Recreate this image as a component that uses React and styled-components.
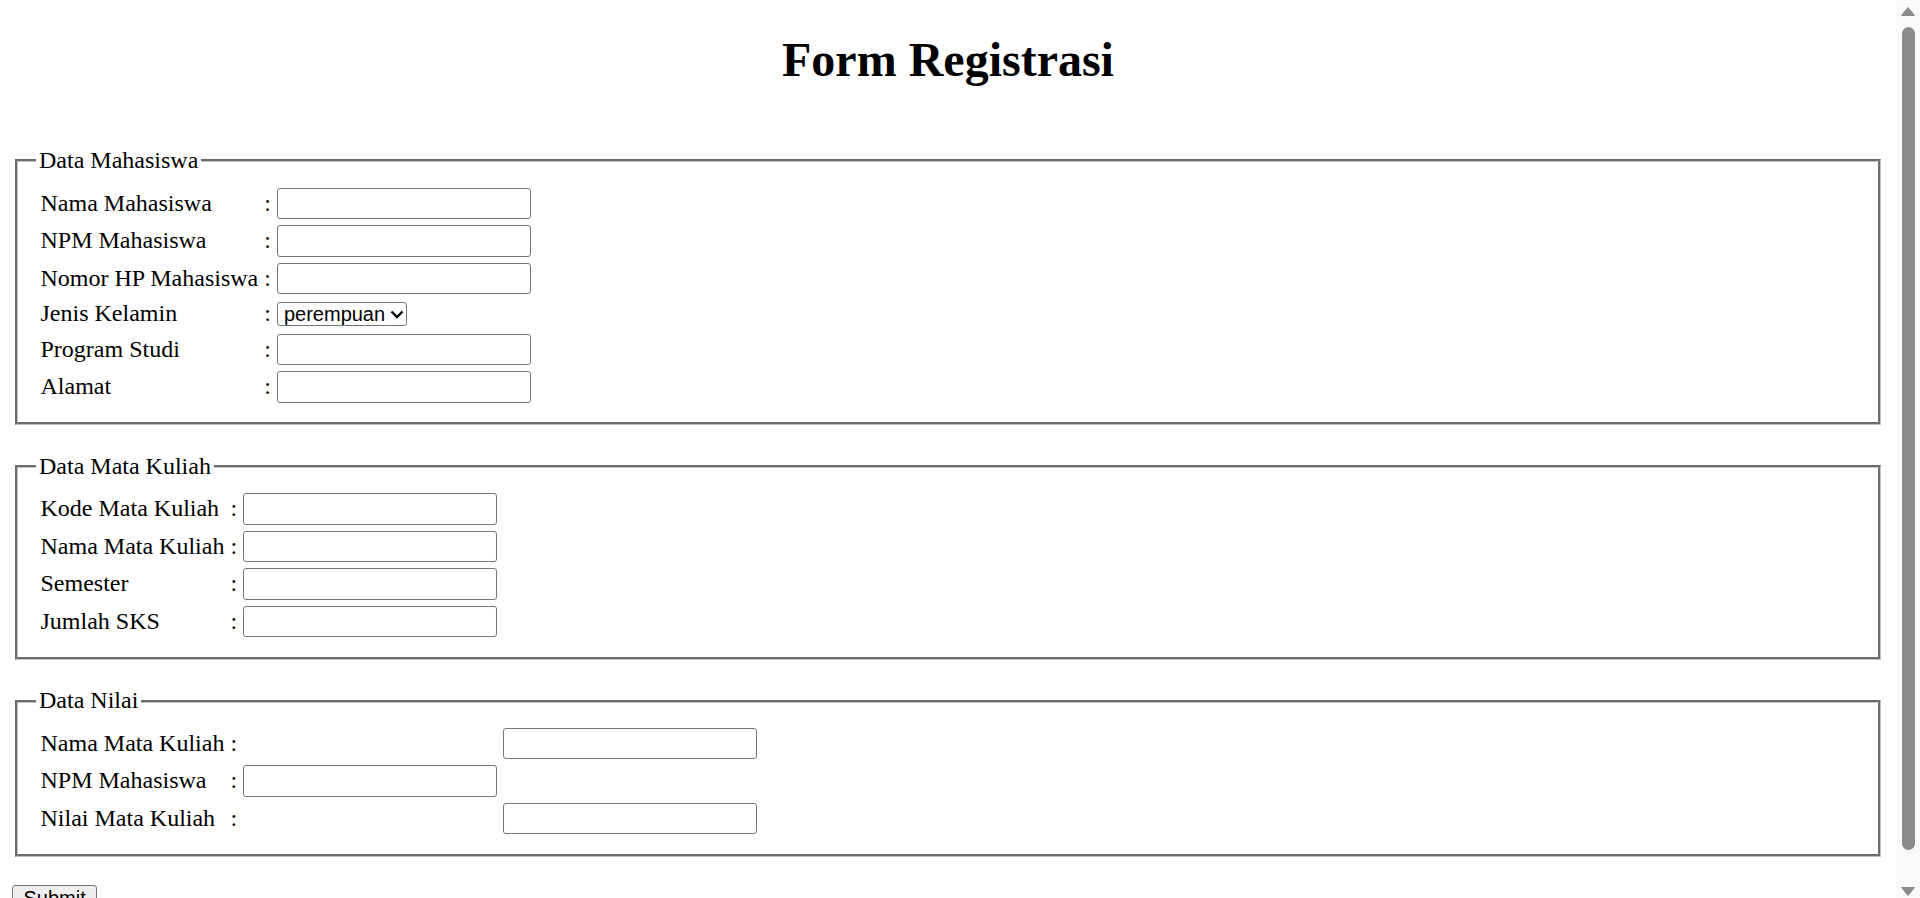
import styled, { createGlobalStyle } from "styled-components"

const GlobalStyle = createGlobalStyle`
html, body {
  margin: 0;
  background: #fff;
}
body {
  font-family: "Liberation Serif", "Times New Roman", serif;
  font-size: 24px;
  line-height: 27.6px;
  color: #000;
}
`

// window frame: page on the left, a classic scrollbar on the right
const Shell = styled.div`
display: flex;
height: 100vh;
overflow: hidden;
`

const Page = styled.div`
flex: 1;
min-width: 0;
padding: 0 12px 12px;
`

const ScrollBar = styled.div`
width: 24px;
flex: none;
display: flex;
flex-direction: column;
background: #fafafa;
`

const ArrowButton = styled.div`
height: 26px;
flex: none;
display: flex;
justify-content: center;
align-items: ${p => (p.down ? "flex-end" : "flex-start")};
padding: ${p => (p.down ? "0 0 2px" : "7px 0 0")};
box-sizing: border-box;
`

const Track = styled.div`
flex: 1;
padding: 1px 5px 0 6px;
`

const Thumb = styled.div`
height: 823px;
border-radius: 7px;
background: #8b8b8b;
`

const Title = styled.h1`
text-align: center;
font-size: 48px;
line-height: 55.2px;
font-weight: bold;
margin: 32.16px 0;
`

const Fieldset = styled.fieldset`
margin: 0 3px;
padding: 8.4px 18px 15px;
border: 3px groove rgb(192, 192, 192);
min-inline-size: min-content;
`

const Legend = styled.legend`
padding: 0 3px;
font-size: 24px;
line-height: 27.6px;
`

const Table = styled.table`
border-collapse: separate;
border-spacing: 3px;
`

const Cell = styled.td`
padding: 1.5px;
vertical-align: middle;
white-space: nowrap;
`

const Input = styled.input`
display: block;
box-sizing: border-box;
width: 254px;
height: 31.5px;
margin: 0;
padding: 1.5px 3px;
border: 1px solid #767676;
border-radius: 3px;
background: #fff;
font-family: "Liberation Sans", Arial, sans-serif;
font-size: 20px;
`

const SelectBox = styled.div`
position: relative;
width: 130px;
`

const Select = styled.select`
display: block;
box-sizing: border-box;
width: 130px;
height: 24px;
margin: 0;
padding: 0 0 0 6px;
border: 1px solid #767676;
border-radius: 3px;
background: #fff;
color: #000;
appearance: none;
font-family: "Liberation Sans", Arial, sans-serif;
font-size: 20px;
line-height: 22px;
`

const Chevron = styled.svg`
position: absolute;
right: 3px;
top: 8px;
pointer-events: none;
`

const Button = styled.button`
margin: 0;
padding: 1.5px 10.5px;
border: 1px solid #767676;
border-radius: 3px;
background: #efefef;
color: #000;
font-family: "Liberation Sans", Arial, sans-serif;
font-size: 20px;
line-height: 23px;
`

const Row = ({ label, children, skip }) => (
    <tr>
        <Cell>{label}</Cell>
        <Cell>:</Cell>
        {skip && <Cell></Cell>}
        <Cell>{children}</Cell>
    </tr>
)

const App = () => {
    return (
        <Shell>
            <GlobalStyle />
            <Page>
                <Title>Form Registrasi</Title>
                <form onSubmit={e => e.preventDefault()}>
                    <br />
                    <Fieldset>
                        <Legend>Data Mahasiswa</Legend>
                        <Table>
                            <tbody>
                                <Row label="Nama Mahasiswa"><Input type="text" /></Row>
                                <Row label="NPM Mahasiswa"><Input type="text" /></Row>
                                <Row label="Nomor HP Mahasiswa"><Input type="text" /></Row>
                                <Row label="Jenis Kelamin">
                                    <SelectBox>
                                        <Select defaultValue="perempuan">
                                            <option value="laki-laki">laki-laki</option>
                                            <option value="perempuan">perempuan</option>
                                        </Select>
                                        <Chevron width="14" height="9" viewBox="0 0 14 9">
                                            <polyline points="1.5,1.5 7,7 12.5,1.5" fill="none" stroke="#000" strokeWidth="2.4" />
                                        </Chevron>
                                    </SelectBox>
                                </Row>
                                <Row label="Program Studi"><Input type="text" /></Row>
                                <Row label="Alamat"><Input type="text" /></Row>
                            </tbody>
                        </Table>
                    </Fieldset>
                    <br />
                    <Fieldset>
                        <Legend>Data Mata Kuliah</Legend>
                        <Table>
                            <tbody>
                                <Row label="Kode Mata Kuliah"><Input type="text" /></Row>
                                <Row label="Nama Mata Kuliah"><Input type="text" /></Row>
                                <Row label="Semester"><Input type="text" /></Row>
                                <Row label="Jumlah SKS"><Input type="text" /></Row>
                            </tbody>
                        </Table>
                    </Fieldset>
                    <br />
                    <Fieldset>
                        <Legend>Data Nilai</Legend>
                        <Table>
                            <tbody>
                                <Row label="Nama Mata Kuliah" skip><Input type="text" /></Row>
                                <Row label="NPM Mahasiswa"><Input type="text" /></Row>
                                <Row label="Nilai Mata Kuliah" skip><Input type="text" /></Row>
                            </tbody>
                        </Table>
                    </Fieldset>
                    <br />
                    <Button type="submit">Submit</Button>
                </form>
            </Page>
            <ScrollBar>
                <ArrowButton>
                    <svg width="14" height="9" viewBox="0 0 14 9">
                        <polygon points="7,0.5 13.5,8.5 0.5,8.5" fill="#8b8b8b" stroke="#8b8b8b" strokeLinejoin="round" />
                    </svg>
                </ArrowButton>
                <Track>
                    <Thumb />
                </Track>
                <ArrowButton down>
                    <svg width="14" height="9" viewBox="0 0 14 9">
                        <polygon points="0.5,0.5 13.5,0.5 7,8.5" fill="#8b8b8b" stroke="#8b8b8b" strokeLinejoin="round" />
                    </svg>
                </ArrowButton>
            </ScrollBar>
        </Shell>
    )
}
export default App
